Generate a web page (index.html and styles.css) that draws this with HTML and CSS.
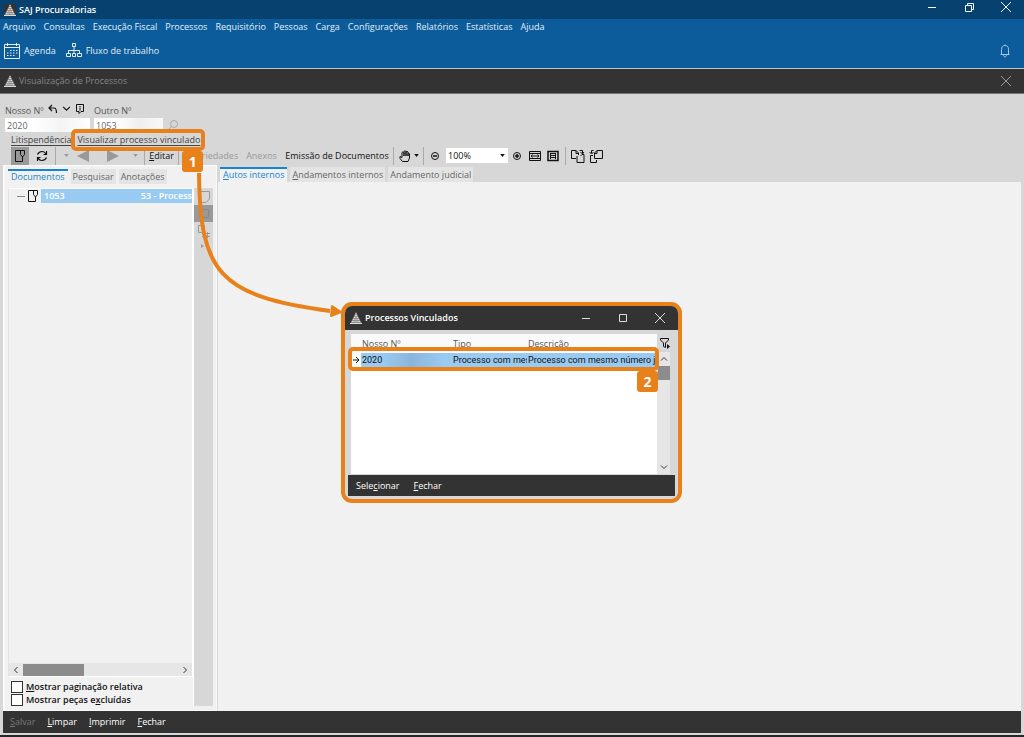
FILE: index.html
```html
<!DOCTYPE html>
<html lang="pt-BR">
<head>
<meta charset="utf-8">
<title>SAJ Procuradorias</title>
<link rel="stylesheet" href="styles.css">
</head>
<body>
<svg class="defs" aria-hidden="true">
  <symbol id="logo" viewBox="0 0 12 12"><path d="M6 0L12 12H0Z" fill="currentColor" opacity=".55"/><path d="M5.500 1H6.500V2H5.500ZM5 3H7V4H5ZM4 5H5.500V6H4ZM6.500 5H8V6H6.500ZM3 7H4.500V8H3ZM5.500 7H6.500V8H5.500ZM7.500 7H9V8H7.500ZM2 9H3.500V10H2ZM4.500 9H5.500V10H4.500ZM6.500 9H7.500V10H6.500ZM8.500 9H10V10H8.500ZM0 11H12V12H0Z" fill="currentColor"/></symbol>
  <symbol id="close" viewBox="0 0 12 12"><path d="M1 1L11 11M11 1L1 11" stroke="currentColor" fill="none"/></symbol>
  <symbol id="doc" viewBox="0 0 12 12"><path d="M1.500 11.500V.5H10.500V4.500L8.500 7L6.500 4.500V.5M8.500 7V11.500H1.500" stroke="currentColor" fill="none"/></symbol>
  <symbol id="down" viewBox="0 0 6 4"><path d="M0 0H6L3 4Z" fill="currentColor"/></symbol>
  <symbol id="chev" viewBox="0 0 8 6"><path d="M1 1.500L4 4.500L7 1.500" stroke="currentColor" fill="none"/></symbol>
</svg>
<header class="titlebar">
  <svg class="app-logo"><use href="#logo"/></svg>
  <h1>SAJ Procuradorias</h1>
  <div class="window-controls">
    <button aria-label="Minimizar"><svg viewBox="0 0 12 12"><path d="M2 6.500H10" stroke="currentColor"/></svg></button>
    <button aria-label="Restaurar"><svg viewBox="0 0 12 12"><path d="M2.500 4.500H8.500V10.500H2.500ZM4.500 4V2.500H10.500V8.500H9" stroke="currentColor" fill="none"/></svg></button>
    <button aria-label="Sair"><svg><use href="#close"/></svg></button>
  </div>
</header>
<div class="ribbon">
  <nav class="menu">
    <button>Arquivo</button><button>Consultas</button><button>Execução Fiscal</button><button>Processos</button><button>Requisitório</button><button>Pessoas</button><button>Carga</button><button>Configurações</button><button>Relatórios</button><button>Estatísticas</button><button>Ajuda</button>
  </nav>
  <div class="shortcuts">
    <button><svg class="i16" viewBox="0 0 16 16"><path d="M.5 1.500H15.500V15.500H.5ZM.5 4.500H15.500M3.500 0V3M12.500 0V3" stroke="currentColor" fill="none"/><path d="M6 7.500H14M3 10H14M3 12.500H11" stroke="currentColor" stroke-dasharray="1.500 1.500"/></svg>Agenda</button>
    <button><svg class="i16" viewBox="0 0 16 16"><path d="M6.500 .5H9.500V3.500H6.500ZM.5 10.500H4.500V13.500H.5ZM6.500 10.500H9.500V13.500H6.500ZM11.500 10.500H15.500V13.500H11.500ZM8 3.500V10.500M2.500 10V7.500H13.500V10" stroke="currentColor" fill="none"/></svg>Fluxo de trabalho</button>
    <button class="bell" aria-label="Notificações"><svg class="i14" viewBox="0 0 14 14"><path d="M7 .5V1.500M2.500 10.500H11.500M3.500 10V5.500C3.500 2.500 5 1.500 7 1.500S10.500 2.500 10.500 5.500V10M5.500 11C5.500 13.500 8.500 13.500 8.500 11" stroke="currentColor" fill="none"/></svg></button>
  </div>
</div>
<div class="subtitle">
  <svg class="app-logo"><use href="#logo"/></svg>
  <h2>Visualização de Processos</h2>
  <button aria-label="Fechar visualização"><svg class="i12"><use href="#close"/></svg></button>
</div>
<main class="workspace">
  <form class="search">
    <div class="field">
      <div class="label-row"><label for="nosso">Nosso Nº</label>
        <svg class="i10" viewBox="0 0 10 10"><path d="M4 1L1 4L4 7M1 4H6Q8.500 4 8.500 9" stroke="currentColor" stroke-width="1.200" fill="none"/></svg>
        <svg class="wide-chev"><use href="#chev"/></svg>
        <svg class="i10" viewBox="0 0 10 10"><path d="M1.500 .5H8.500V7.500H6L4 9.500V7.500H1.500ZM5 2V3M5 3.500V6.500" stroke="currentColor" fill="none"/></svg>
      </div>
      <input id="nosso" class="nosso" value="2020">
    </div>
    <div class="field">
      <div class="label-row"><label for="outro">Outro Nº</label></div>
      <input id="outro" class="outro" value="1053">
    </div>
    <button type="button" class="find" aria-label="Procurar"><svg class="i10" viewBox="0 0 10 10"><circle cx="6" cy="4" r="3.500" stroke="currentColor" fill="none"/><path d="M3.500 6.500L.5 9.500" stroke="currentColor"/></svg></button>
  </form>
  <div class="links">
    <a href="#litis">Litispendência</a>
    <a href="#vinculado" class="marked">Visualizar processo vinculado<span class="step step-one">1</span></a>
  </div>
  <div class="toolbar">
    <button class="on" aria-label="Documento"><svg class="i12"><use href="#doc"/></svg></button>
    <button aria-label="Atualizar"><svg class="i12" viewBox="0 0 12 12"><path d="M10.500 5Q9 1.500 6 1.500Q3 1.500 1.500 4.500M7.500 4.500H10.500V1M1.500 7Q3 10.500 6 10.500Q9 10.500 10.500 7.500M4.500 7.500H1.500V11" stroke="currentColor" stroke-width="1.200" fill="none"/></svg></button>
    <i class="sep"></i>
    <svg class="drop dim first"><use href="#down"/></svg>
    <button class="dim" aria-label="Anterior"><svg class="i12" viewBox="0 0 12 12"><path d="M12 0V12L0 6Z" fill="currentColor"/></svg></button>
    <button class="dim next" aria-label="Próximo"><svg class="i12" viewBox="0 0 12 12"><path d="M0 0V12L12 6Z" fill="currentColor"/></svg></button>
    <svg class="drop dim last"><use href="#down"/></svg>
    <i class="sep"></i>
    <button class="text edit"><u>E</u>ditar</button>
    <i class="sep"></i>
    <button class="text dim props" disabled>Propriedades</button>
    <button class="text dim annex" disabled>Anexos</button>
    <button class="text emission">Emissão de Documentos</button>
    <i class="sep"></i>
    <button class="hand" aria-label="Mover página"><svg class="i12" viewBox="0 0 12 12"><path d="M3.500 11.500L1 8.500V6.500L3 7.500V2.500Q4 1 5 2.500V6V1.500Q6 0 7 1.500V6V2Q8 .5 9 2V6V3.500Q10 2.500 10.500 4V8L9 11.500Z" stroke="currentColor" fill="none"/></svg><svg class="drop"><use href="#down"/></svg></button>
    <i class="sep"></i>
    <button class="round" aria-label="Reduzir"><svg class="i10" viewBox="0 0 10 10"><circle cx="5" cy="5" r="3.500" stroke="currentColor" fill="none"/><path d="M3 5H7" stroke="currentColor" stroke-width="1.500"/></svg></button>
    <span class="zoom"><select aria-label="Zoom"><option>100%</option></select><svg class="drop"><use href="#down"/></svg></span>
    <button class="round" aria-label="Ampliar"><svg class="i10" viewBox="0 0 10 10"><circle cx="5" cy="5" r="3.500" stroke="currentColor" fill="none"/><path d="M3 5H7M5 3V7" stroke="currentColor" stroke-width="1.500"/></svg></button>
    <button class="fit" aria-label="Ajustar largura"><svg class="i12" viewBox="0 0 12 12"><path d="M.5 1.500H11.500V10.500H.5ZM1 3.500H11M1 8.500H11M2 6H10M3.500 4.500L2 6L3.500 7.500M8.500 4.500L10 6L8.500 7.500" stroke="currentColor" fill="none"/></svg></button>
    <button class="fit" aria-label="Página inteira"><svg class="i12" viewBox="0 0 12 12"><path d="M1 1.500H11V10.500H1Z" stroke="currentColor" stroke-width="1.500" fill="none"/><path d="M3.500 3V9M8.500 3V9M4 3.500H8M4 5.500H8M4 7.500H8" stroke="currentColor" fill="none"/></svg></button>
    <i class="sep"></i>
    <button class="swap" aria-label="Girar à direita"><svg class="i14" viewBox="0 0 14 14"><path d="M5 9.500H.5V1.500H5L7.500 4V6M5 1.500V4.500H7.500M6 7V13.500H13V5.500H11L9.500 7M8.500 1.500H11.500V4M9.500 3L11.500 5L13 3" stroke="currentColor" fill="none"/></svg></button>
    <button class="swap" aria-label="Girar à esquerda"><svg class="i14" viewBox="0 0 14 14"><path d="M9 9.500H13.500V1.500H8L5.500 4V9.500H9M8 1.500V4.500H5.500M4 6.500H1.500V13.500H7.500V11M4.500 1.500H2.500V4M.5 3L2.500 5L4.500 3" stroke="currentColor" fill="none"/></svg></button>
  </div>
  <div class="panels">
    <section class="side">
      <div class="tabs side-tabs"><button class="active">Documentos</button><button>Pesquisar</button><button>Anotações</button></div>
      <div class="side-body">
        <div class="side-main">
          <div class="tree">
            <div class="node"><i class="dash"></i><svg class="i12"><use href="#doc"/></svg><div class="selected"><span>1053</span><span>53 - Process</span></div></div>
            <div class="hscroll"><svg class="arrow left"><use href="#chev"/></svg><i></i><svg class="arrow right"><use href="#chev"/></svg></div>
          </div>
          <label class="check"><input type="checkbox"><span><u>M</u>ostrar paginação relativa</span></label>
          <label class="check"><input type="checkbox"><span>Mostrar peças e<u>x</u>cluídas</span></label>
        </div>
        <div class="strip">
          <button aria-label="Marcador"><svg class="i14" viewBox="0 0 14 14"><path d="M1.500 1.500H12.500V9L9 12.500H4.500L1.500 9Z" stroke="currentColor" fill="none"/></svg></button>
          <button class="pressed" aria-label="Nota"><svg class="i14" viewBox="0 0 14 14"><path d="M2.500 2.500H11.500V10.500H2.500Z" stroke="currentColor" fill="none"/></svg></button>
          <button aria-label="Vínculos"><svg class="i14" viewBox="0 0 14 14"><path d="M1.500 1.500H7.500V8.500H1.500ZM5 9.500H13M5 12.500H13M6.500 8V14M10.500 8V14" stroke="currentColor" fill="none"/></svg></button>
          <svg class="strip-arrow" viewBox="0 0 4 4"><path d="M0 0L3 2L0 4Z" fill="currentColor"/></svg>
        </div>
      </div>
    </section>
    <section class="content">
      <div class="tabs content-tabs"><button class="active"><u>A</u>utos internos</button><button><u>A</u>ndamentos internos</button><button>Andamento judicial</button></div>
      <div class="page"></div>
    </section>
  </div>
  <footer class="actions"><button disabled><u>S</u>alvar</button><button><u>L</u>impar</button><button><u>I</u>mprimir</button><button><u>F</u>echar</button></footer>
</main>

<div class="dialog" role="dialog" aria-labelledby="dlg-title">
  <div class="dialog-head">
    <svg class="app-logo"><use href="#logo"/></svg><h3 id="dlg-title">Processos Vinculados</h3>
    <div class="dialog-controls">
      <button aria-label="Minimizar janela"><svg class="i12" viewBox="0 0 12 12"><path d="M2 6.500H10" stroke="currentColor"/></svg></button>
      <button aria-label="Maximizar janela"><svg class="i12" viewBox="0 0 12 12"><path d="M2.500 2.500H9.500V9.500H2.500Z" stroke="currentColor" fill="none"/></svg></button>
      <button aria-label="Fechar janela"><svg class="i12"><use href="#close"/></svg></button>
    </div>
  </div>
  <div class="dialog-body">
    <div class="grid-box">
      <table>
        <thead><tr><th class="mark"></th><th class="num">Nosso Nº</th><th class="kind">Tipo</th><th>Descrição</th></tr></thead>
        <tbody><tr><td class="mark"><svg class="i8" viewBox="0 0 8 8"><path d="M1 4H7M4 1L7 4L4 7" stroke="currentColor" fill="none"/></svg></td><td class="hl masked">2020</td><td class="hl">Processo com mes</td><td class="hl">Processo com mesmo número j</td></tr></tbody>
      </table>
      <div class="row-mark"><span class="step step-two">2</span></div>
    </div>
    <div class="dialog-side">
      <button aria-label="Filtrar"><svg class="i12" viewBox="0 0 12 12"><path d="M1.500 1.500H9.500V3L6.500 6V10.500L4.500 9.500V6L1.500 3Z" stroke="currentColor" fill="none"/><path d="M8 7L11 9.500L8 12Z" fill="currentColor"/></svg></button>
      <div class="vscroll"><svg class="arrow up"><use href="#chev"/></svg><i></i><svg class="arrow"><use href="#chev"/></svg></div>
    </div>
  </div>
  <div class="dialog-actions"><button>Sele<u>c</u>ionar</button><button><u>F</u>echar</button></div>
</div>
<svg class="connector" viewBox="0 0 146 148" aria-hidden="true"><path d="M3 0C4 100 23 123 134 138" stroke="#e8811a" stroke-width="4" fill="none"/><path d="M136 133L145 139L135 143Z" fill="#e8811a" stroke="#e8811a" stroke-width="2" stroke-linejoin="round"/></svg>
</body>
</html>
```
FILE: styles.css
```css
* { box-sizing: border-box; }
body { margin: 0; min-height: 100vh; display: flex; flex-direction: column; position: relative; background: #d7d7d7; color: #111; font: 9px/12px "Open Sans", "Noto Sans", sans-serif; border-bottom: 2px solid #252525; }
button, input, select { font: inherit; color: inherit; margin: 0; padding: 0; border: 0; background: none; border-radius: 0; }
button { display: flex; align-items: center; justify-content: center; white-space: nowrap; }
h1, h2, h3 { margin: 0; font-size: 9px; line-height: 12px; font-weight: 600; }
svg { display: block; flex: none; }
u { text-underline-offset: 1px; }
.defs { position: absolute; width: 0; height: 0; }
.app-logo { width: 12px; height: 12px; color: #ddd; }
.i8 { width: 8px; height: 8px; }
.i10 { width: 10px; height: 10px; }
.i12 { width: 12px; height: 12px; }
.i14 { width: 14px; height: 14px; }
.i16 { width: 16px; height: 16px; }

.titlebar { display: flex; align-items: center; height: 19px; padding: 0 12px 0 4px; gap: 3px; background: #06416f; color: #fff; }
.titlebar .app-logo { background: #333; }
.window-controls { margin-left: auto; margin-bottom: 5px; display: flex; gap: 25px; }
.window-controls svg { width: 12px; height: 12px; }
.ribbon { height: 50px; background: #0c5c9c; color: #e6eef5; border-bottom: 1px solid #c3c3c3; }
.menu { display: flex; gap: 8px; padding: 2px 3px 0; }
.shortcuts { display: flex; gap: 10px; padding: 9px 12px 0 4px; }
.shortcuts button { gap: 4px; height: 17px; }
.shortcuts .bell { margin-left: auto; color: #a9c6df; }
.subtitle { display: flex; align-items: center; height: 25px; padding: 0 12px 0 4px; gap: 3px; background: #333; color: #858585; border-bottom: 1px solid #777; }
.subtitle h2 { font-weight: 400; }
.subtitle button { margin-left: auto; color: #999; }

.workspace { flex: 1; display: flex; flex-direction: column; padding: 10px 3px 2px; }
.search { display: flex; gap: 4px; padding-left: 2px; color: #555; }
.label-row { display: flex; gap: 4px; height: 14px; color: #111; }
.label-row label { color: #555; padding-top: 1px; }
.wide-chev { width: 9px; height: 9px; }
.search input { display: block; height: 14px; padding: 0 2px; background: #fff; color: #666; }
.search .nosso { width: 85px; background: linear-gradient(90deg, #fff 35%, #f4f4f4 65%, #fff); }
.search .outro { width: 69px; background: linear-gradient(90deg, #fff 35%, #efefef 65%, #f8f8f8); }
.find { align-self: flex-start; margin: 16px 0 0 1px; height: 10px; color: #aaa; }
.links { display: flex; gap: 6px; padding: 2px 0 0 8px; }
.links a { color: #444; position: relative; text-underline-offset: 2px; }
.marked::after { content: ""; position: absolute; inset: -5px -5px -5px -6px; border: 4px solid #e8811a; border-radius: 5px; z-index: 2; }
.step { position: absolute; z-index: 4; width: 21px; height: 21px; border-radius: 3px; background: #e8811a; color: #fff; font-weight: 700; font-size: 14px; line-height: 21px; text-align: center; }
.step-one { right: -3px; top: 17px; }
.step-two { right: -3px; top: 20px; }
.toolbar { display: flex; align-items: center; height: 19px; margin-left: 8px; white-space: nowrap; }
.toolbar button { height: 18px; }
.toolbar .on { width: 18px; background: #999; }
.toolbar .on + button { width: 26px; }
.sep { width: 1px; height: 18px; background: #aaa; flex: none; }
.drop { width: 5px; height: 3px; }
.dim { color: #999; }
.first { margin: 0 8px; }
.next { margin-left: 18px; }
.last { margin: 0 6px 0 14px; }
.edit { width: 33px; }
.props { width: 62px; }
.annex { width: 41px; }
.emission { width: 110px; margin-right: 1px; }
.hand { width: 29px; gap: 3px; }
.round { width: 22px; }
.zoom { display: flex; align-items: center; width: 62px; height: 15px; padding-right: 3px; background: #fff; }
.zoom select { appearance: none; flex: 1; min-width: 0; padding: 0 2px; }
.zoom + .round { width: 18px; }
.fit { width: 18px; }
.fit + .sep { margin: 0 3px; }
.swap { width: 18px; }

.panels { flex: 1; display: flex; gap: 1px; }
.side { width: 214px; display: flex; flex-direction: column; padding: 3px 3px 4px; background: #f1f1f1; border: 1px solid #fafafa; border-width: 1px 1px 1px 2px; }
.tabs { display: flex; gap: 3px; color: #666; }
.tabs button { height: 15px; padding: 0 2px; background: #e4e4e4; }
.tabs .active { padding: 0 3px 2px; color: #1684d0; background: #f1f1f1; border-top: 2px solid #1684d0; }
.side-body { flex: 1; display: flex; padding-top: 4px; }
.side-main { flex: 1; min-width: 0; display: flex; flex-direction: column; }
.tree { flex: 1; display: flex; flex-direction: column; border: 1px solid #fff; border-left-color: #e3e3e3; margin-bottom: 3px; }
.node { display: flex; align-items: center; height: 14px; padding-left: 8px; }
.dash { width: 8px; height: 1px; background: #888; margin-right: 2px; }
.selected { flex: 1; min-width: 0; height: 14px; margin-left: 2px; padding-left: 3px; display: flex; align-items: center; justify-content: space-between; background: #99caf2; color: #fff; font-weight: 600; white-space: nowrap; }
.hscroll { margin-top: auto; height: 13px; display: flex; align-items: center; background: #e6e6e6; padding: 0 3px; }
.hscroll i { width: 61px; height: 12px; background: #8c8c8c; margin-left: 3px; }
.arrow { width: 8px; height: 6px; color: #333; }
.left { transform: rotate(90deg); }
.right { transform: rotate(-90deg); margin-left: auto; }
.up { transform: rotate(180deg); }
.check { display: flex; align-items: center; height: 13px; gap: 3px; padding-left: 3px; font-weight: 600; }
.check input { appearance: none; width: 12px; height: 12px; border: 1px solid #333; background: #fff; }
.strip { width: 20px; background: #d7d7d7; border-left: 1px solid #fff; color: #999; }
.strip button { width: 19px; height: 17px; }
.strip .pressed { background: #999; color: #888; }
.strip-arrow { width: 4px; height: 4px; margin: 5px 0 0 7px; }
.content { flex: 1; display: flex; flex-direction: column; }
.content-tabs { padding: 2px 2px 0; }
.page { flex: 1; background: #f1f1f1; }
.actions { display: flex; gap: 12px; height: 22px; padding-left: 7px; background: #333; color: #fff; }
.actions button:disabled { color: #777; }

.dialog { position: absolute; z-index: 2; left: 341px; top: 302px; width: 341px; height: 201px; display: flex; flex-direction: column; border: 4px solid #e8811a; border-radius: 11px; background: #d7d7d7; overflow: hidden; }
.dialog-head { display: flex; align-items: center; height: 24px; padding: 0 12px 0 5px; gap: 3px; background: #333; color: #fff; }
.dialog-controls { margin-left: auto; display: flex; gap: 25px; color: #ddd; }
.dialog-body { flex: 1; display: flex; padding: 4px 6px 1px 6px; min-height: 0; }
.grid-box { flex: 1; min-width: 0; position: relative; background: #fff; }
table { width: 100%; table-layout: fixed; border-collapse: collapse; }
th { height: 19px; padding: 0 0 0 1px; text-align: left; font-weight: 400; color: #555; background: #fafafa; }
td { height: 14px; padding: 0 0 0 1px; white-space: nowrap; overflow: hidden; font-family: Roboto, "Open Sans", sans-serif; }
.mark { width: 10px; }
.num { width: 91px; }
.kind { width: 75px; }
.hl { background: #99caf2; }
.masked { background: linear-gradient(90deg, #99caf2 25%, #8ab5da 55%, #99caf2 90%); }
.row-mark { position: absolute; left: -3px; right: -2px; top: 13px; height: 24px; border: 4px solid #e8811a; border-radius: 5px; }
.dialog-side { width: 15px; display: flex; flex-direction: column; }
.dialog-side button { height: 18px; width: 15px; }
.vscroll { flex: 1; width: 13px; display: flex; flex-direction: column; align-items: center; background: #e6e6e6; padding: 4px 0; }
.vscroll i { width: 12px; height: 14px; margin-top: 4px; background: #8c8c8c; }
.vscroll .arrow:last-child { margin-top: auto; }
.dialog-actions { display: flex; gap: 14px; height: 21px; margin: 0 3px 3px; padding: 0 8px; background: #333; color: #fff; }
.connector { position: absolute; z-index: 3; left: 196px; top: 173px; width: 146px; height: 148px; }
```
